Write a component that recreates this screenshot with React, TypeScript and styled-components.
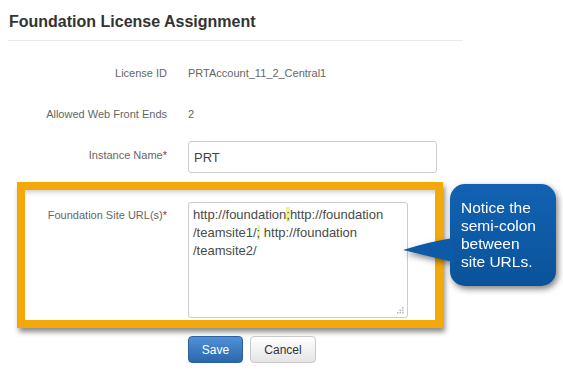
import React from 'react';
import styled, { createGlobalStyle } from 'styled-components';

const Global = createGlobalStyle`
  html, body { margin: 0; padding: 0; background: #ffffff; }
  body { font-family: "Liberation Sans", Arial, sans-serif; }
`;

const Page = styled.div`
  position: relative;
  width: 563px;
  height: 370px;
  padding: 0 100px 0 8px;
  box-sizing: border-box;
  overflow: hidden;
`;

const Header = styled.div`
  padding: 12px 0 8px 1px;
  border-bottom: 1px solid #e9e9e9;
`;

const Title = styled.h1`
  margin: 0;
  font-size: 16px;
  line-height: 20px;
  font-weight: bold;
  color: #333333;
`;

const Form = styled.div`
  padding-top: 24px;
`;

const Row = styled.div<{ $top?: number }>`
  display: flex;
  align-items: flex-start;
  margin-top: ${p => p.$top ?? 0}px;
`;

const Label = styled.div<{ $width: number; $pad?: number }>`
  width: ${p => p.$width}px;
  flex: none;
  padding-top: ${p => p.$pad ?? 0}px;
  text-align: right;
  font-size: 11px;
  line-height: 16px;
  color: #666666;
`;

const Req = styled.span`
  color: #a8322c;
`;

const Value = styled.div`
  margin-left: 21px;
  font-size: 11px;
  line-height: 16px;
  color: #666666;
`;

const TextInput = styled.div`
  margin-left: 21px;
  width: 249px;
  height: 32px;
  box-sizing: border-box;
  border: 1px solid #cccccc;
  border-radius: 3px;
  padding: 0 5px;
  display: flex;
  align-items: center;
  font-size: 13px;
  color: #444444;
`;

const Highlight = styled.div`
  margin: 9px 0 0 9px;
  width: 426px;
  box-sizing: border-box;
  border: 8px solid #f3a80c;
  padding: 12px 0 2px 0;
  box-shadow: 2px 4px 5px rgba(0, 0, 0, 0.45), inset 0 5px 5px -3px rgba(0, 0, 0, 0.22);
`;

const TextArea = styled.div`
  position: relative;
  margin-left: 21px;
  width: 220px;
  height: 116px;
  box-sizing: border-box;
  border: 1px solid #cccccc;
  border-radius: 3px;
  padding: 3px 4px;
  font-size: 13px;
  line-height: 18px;
  color: #4a4a4a;
`;

const Line = styled.div`
  white-space: nowrap;
`;

const Mark = styled.span`
  background: #f0f68c;
`;

const Grip = styled.svg`
  position: absolute;
  right: 3px;
  bottom: 3px;
`;

const Buttons = styled.div`
  display: flex;
  gap: 7px;
  margin-top: 8px;
  padding-left: 180px;
`;

const Button = styled.button<{ $primary?: boolean; $width: number }>`
  width: ${p => p.$width}px;
  height: 27px;
  box-sizing: border-box;
  border-radius: 4px;
  font-family: "Liberation Sans", Arial, sans-serif;
  font-size: 12px;
  padding: 0;
  cursor: pointer;
  border: 1px solid ${p => (p.$primary ? '#2b5f9e' : '#c9c9c9')};
  color: ${p => (p.$primary ? '#ffffff' : '#333333')};
  background: ${p =>
    p.$primary
      ? 'linear-gradient(#4f91d8, #2c66ab)'
      : 'linear-gradient(#ffffff, #e4e4e4)'};
`;

const Callout = styled.div`
  position: absolute;
  left: 450px;
  top: 184px;
  width: 106px;
  height: 102px;
  filter: drop-shadow(2px 3px 3px rgba(0, 0, 0, 0.5));
`;

const Bubble = styled.div`
  width: 100%;
  height: 100%;
  box-sizing: border-box;
  border-radius: 15px;
  background: linear-gradient(#1262b3, #0a5399);
  padding: 15px 0 0 11px;
  color: #ffffff;
  font-size: 15.5px;
  line-height: 18px;
`;

const Pointer = styled.svg`
  position: absolute;
  left: -50px;
  top: 52px;
`;

export default function App() {
  return (
    <Page>
      <Global />
      <Header>
        <Title>Foundation License Assignment</Title>
      </Header>
      <Form>
        <Row>
          <Label $width={159}>License ID</Label>
          <Value>PRTAccount_11_2_Central1</Value>
        </Row>
        <Row $top={25}>
          <Label $width={159}>Allowed Web Front Ends</Label>
          <Value>2</Value>
        </Row>
        <Row $top={19}>
          <Label $width={159} $pad={6}>
            Instance Name<Req>*</Req>
          </Label>
          <TextInput>PRT</TextInput>
        </Row>
        <Highlight>
          <Row>
            <Label $width={142} $pad={5}>
              Foundation Site URL(s)<Req>*</Req>
            </Label>
            <TextArea>
              <Line>
                http://foundation<Mark>;</Mark>http://foundation
              </Line>
              <Line>
                /teamsite1/<Mark>;</Mark> http://foundation
              </Line>
              <Line>/teamsite2/</Line>
              <Grip width="7" height="7" viewBox="0 0 7 7">
                <rect x="5" y="0" width="1.5" height="1.5" fill="#b5b5b5" />
                <rect x="2.5" y="2.5" width="1.5" height="1.5" fill="#b5b5b5" />
                <rect x="5" y="2.5" width="1.5" height="1.5" fill="#b5b5b5" />
                <rect x="0" y="5" width="1.5" height="1.5" fill="#b5b5b5" />
                <rect x="2.5" y="5" width="1.5" height="1.5" fill="#b5b5b5" />
                <rect x="5" y="5" width="1.5" height="1.5" fill="#b5b5b5" />
              </Grip>
            </TextArea>
          </Row>
        </Highlight>
        <Buttons>
          <Button $primary $width={55}>Save</Button>
          <Button $width={66}>Cancel</Button>
        </Buttons>
      </Form>
      <Callout>
        <Pointer width="53" height="28" viewBox="0 0 53 28">
          <path d="M3 14 Q28 6 53 2 L53 26 Q28 20 3 14 Z" fill="#0e5aa6" />
        </Pointer>
        <Bubble>
          Notice the
          <br />
          semi-colon
          <br />
          between
          <br />
          site URLs.
        </Bubble>
      </Callout>
    </Page>
  );
}
